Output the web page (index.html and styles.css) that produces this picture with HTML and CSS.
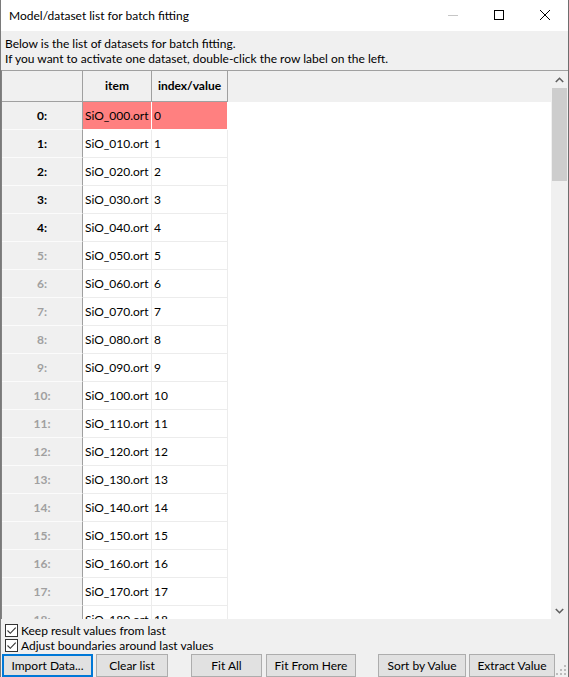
FILE: index.html
```html
<!DOCTYPE html>
<html>
<head>
<meta charset="utf-8">
<link rel="stylesheet" href="styles.css">
</head>
<body>
<div class="window">
  <div class="titlebar">
    <span class="title">Model/dataset list for batch fitting</span>
    <div class="controls">
      <span class="ctl"><svg width="10" height="10" viewBox="0 0 10 10"><line x1="0" y1="5.5" x2="10" y2="5.5" stroke="#c6c6c6" stroke-width="1"/></svg></span>
      <span class="ctl"><svg width="10" height="10" viewBox="0 0 10 10"><rect x="0.5" y="0.5" width="9" height="9" fill="none" stroke="#000" stroke-width="1"/></svg></span>
      <span class="ctl"><svg width="10" height="10" viewBox="0 0 10 10"><path d="M0 0 L10 10 M10 0 L0 10" stroke="#000" stroke-width="1"/></svg></span>
    </div>
  </div>
  <div class="body">
    <div class="intro">
      <div>Below is the list of datasets for batch fitting.</div>
      <div>If you want to activate one dataset, double-click the row label on the left.</div>
    </div>
    <div class="grid-frame">
      <div class="grid-view">
        <div class="hdr-row">
          <div class="corner"></div>
          <div class="colhdr c-item">item</div>
          <div class="colhdr c-val">index/value</div>
        </div>
        <div class="row sel"><div class="rlabel">0:</div><div class="cell c-item">SiO_000.ort</div><div class="cell c-val">0</div></div>
        <div class="row"><div class="rlabel">1:</div><div class="cell c-item">SiO_010.ort</div><div class="cell c-val">1</div></div>
        <div class="row"><div class="rlabel">2:</div><div class="cell c-item">SiO_020.ort</div><div class="cell c-val">2</div></div>
        <div class="row"><div class="rlabel">3:</div><div class="cell c-item">SiO_030.ort</div><div class="cell c-val">3</div></div>
        <div class="row"><div class="rlabel">4:</div><div class="cell c-item">SiO_040.ort</div><div class="cell c-val">4</div></div>
        <div class="row"><div class="rlabel dim">5:</div><div class="cell c-item">SiO_050.ort</div><div class="cell c-val">5</div></div>
        <div class="row"><div class="rlabel dim">6:</div><div class="cell c-item">SiO_060.ort</div><div class="cell c-val">6</div></div>
        <div class="row"><div class="rlabel dim">7:</div><div class="cell c-item">SiO_070.ort</div><div class="cell c-val">7</div></div>
        <div class="row"><div class="rlabel dim">8:</div><div class="cell c-item">SiO_080.ort</div><div class="cell c-val">8</div></div>
        <div class="row"><div class="rlabel dim">9:</div><div class="cell c-item">SiO_090.ort</div><div class="cell c-val">9</div></div>
        <div class="row"><div class="rlabel dim">10:</div><div class="cell c-item">SiO_100.ort</div><div class="cell c-val">10</div></div>
        <div class="row"><div class="rlabel dim">11:</div><div class="cell c-item">SiO_110.ort</div><div class="cell c-val">11</div></div>
        <div class="row"><div class="rlabel dim">12:</div><div class="cell c-item">SiO_120.ort</div><div class="cell c-val">12</div></div>
        <div class="row"><div class="rlabel dim">13:</div><div class="cell c-item">SiO_130.ort</div><div class="cell c-val">13</div></div>
        <div class="row"><div class="rlabel dim">14:</div><div class="cell c-item">SiO_140.ort</div><div class="cell c-val">14</div></div>
        <div class="row"><div class="rlabel dim">15:</div><div class="cell c-item">SiO_150.ort</div><div class="cell c-val">15</div></div>
        <div class="row"><div class="rlabel dim">16:</div><div class="cell c-item">SiO_160.ort</div><div class="cell c-val">16</div></div>
        <div class="row"><div class="rlabel dim">17:</div><div class="cell c-item">SiO_170.ort</div><div class="cell c-val">17</div></div>
        <div class="row"><div class="rlabel dim">18:</div><div class="cell c-item">SiO_180.ort</div><div class="cell c-val">18</div></div>
      </div>
      <div class="vscroll">
        <div class="sbtn"><svg width="9" height="6" viewBox="0 0 9 6"><path d="M0.8 5 L4.5 1.3 L8.2 5" fill="none" stroke="#606060" stroke-width="1.6"/></svg></div>
        <div class="track"><div class="thumb"></div></div>
        <div class="sbtn"><svg width="9" height="6" viewBox="0 0 9 6"><path d="M0.8 1 L4.5 4.7 L8.2 1" fill="none" stroke="#606060" stroke-width="1.6"/></svg></div>
      </div>
    </div>
    <div class="checks">
      <label class="check"><span class="box"><svg width="11" height="11" viewBox="0 0 11 11"><path d="M1.5 5.5 L4.3 8.3 L9.7 2.6" fill="none" stroke="#333" stroke-width="1.1"/></svg></span>Keep result values from last</label>
      <label class="check"><span class="box"><svg width="11" height="11" viewBox="0 0 11 11"><path d="M1.5 5.5 L4.3 8.3 L9.7 2.6" fill="none" stroke="#333" stroke-width="1.1"/></svg></span>Adjust boundaries around last values</label>
    </div>
    <div class="buttons">
      <button class="btn focus b-import">Import Data...</button>
      <button class="btn b-clear">Clear list</button>
      <button class="btn b-fitall">Fit All</button>
      <button class="btn b-fithere">Fit From Here</button>
      <button class="btn b-sort">Sort by Value</button>
      <button class="btn b-extract">Extract Value</button>
    </div>
  </div>
  <svg class="grip" width="11" height="11" viewBox="0 0 11 11">
    <rect x="8" y="0" width="2" height="2" fill="#bcbcbc"/>
    <rect x="4" y="4" width="2" height="2" fill="#bcbcbc"/>
    <rect x="8" y="4" width="2" height="2" fill="#bcbcbc"/>
    <rect x="0" y="8" width="2" height="2" fill="#bcbcbc"/>
    <rect x="4" y="8" width="2" height="2" fill="#bcbcbc"/>
    <rect x="8" y="8" width="2" height="2" fill="#bcbcbc"/>
  </svg>
</div>
</body>
</html>
```
FILE: styles.css
```css
* { box-sizing: border-box; }
html, body { margin: 0; padding: 0; }
body {
  width: 569px;
  height: 677px;
  overflow: hidden;
  font-family: Lato, "Noto Sans", sans-serif;
  font-size: 12px;
  color: #000;
  background: #f0f0f0;
}
.window {
  position: relative;
  width: 569px;
  height: 677px;
  display: flex;
  flex-direction: column;
  border-left: 1px solid #7a7a7a;
  border-right: 1px solid #6e6e6e;
  background: #f0f0f0;
}
.titlebar {
  height: 31px;
  flex: none;
  background: #fff;
  display: flex;
  align-items: center;
}
.title {
  padding-left: 8px;
  font-size: 12px;
  line-height: 16px;
  flex: 1;
}
.controls { display: flex; height: 31px; }
.ctl {
  width: 46px;
  height: 31px;
  display: flex;
  align-items: center;
  justify-content: center;
}
.ctl svg { display: block; margin-top: -1px; }
.body {
  flex: 1;
  display: flex;
  flex-direction: column;
}
.intro {
  padding: 5px 0 4px 4px;
  line-height: 15px;
  white-space: nowrap;
}
.grid-frame {
  height: 549px;
  flex: none;
  display: flex;
  border-top: 1px solid #a0a0a0;
  border-left: 1px solid #828282;
  background: #fff;
}
.grid-view {
  flex: 1;
  overflow: hidden;
  background: #fff;
}
.hdr-row {
  display: flex;
  height: 31px;
  background: #f0f0f0;
}
.corner, .colhdr {
  height: 31px;
  border-right: 1px solid #a0a0a0;
  border-bottom: 1px solid #a0a0a0;
  background: #f0f0f0;
}
.corner { width: 81px; }
.colhdr {
  font-weight: bold;
  display: flex;
  align-items: center;
  justify-content: center;
  padding-bottom: 1px;
}
.c-item { width: 69px; }
.c-val { width: 76px; }
.row {
  display: flex;
  height: 28px;
}
.rlabel {
  width: 81px;
  height: 28px;
  background: #f0f0f0;
  border-right: 1px solid #a0a0a0;
  border-bottom: 1px solid #fbfbfb;
  font-weight: bold;
  display: flex;
  align-items: center;
  justify-content: center;
  padding-bottom: 1px;
}
.rlabel.dim { color: #a0a0a0; }
.cell {
  height: 28px;
  border-right: 1px solid #ececec;
  border-bottom: 1px solid #ececec;
  padding: 0 0 1px 2px;
  display: flex;
  align-items: center;
  white-space: nowrap;
  overflow: hidden;
}
.row.sel .cell {
  background: #ff8080;
  border-right-color: #fff;
  border-bottom-color: #fff;
}
.vscroll {
  width: 17px;
  flex: none;
  background: #f0f0f0;
  display: flex;
  flex-direction: column;
}
.sbtn {
  height: 17px;
  display: flex;
  align-items: center;
  justify-content: center;
}
.sbtn svg { display: block; }
.track {
  flex: 1;
  padding: 0 1px;
}
.thumb {
  height: 93px;
  background: #cdcdcd;
}
.checks {
  margin-top: 4px;
  padding-left: 4px;
  display: flex;
  flex-direction: column;
}
.check {
  height: 15px;
  display: flex;
  align-items: center;
  line-height: 15px;
  white-space: nowrap;
}
.box {
  width: 13px;
  height: 13px;
  border: 1px solid #333;
  background: #fff;
  margin-right: 3px;
  display: flex;
  align-items: center;
  justify-content: center;
}
.box svg { display: block; }
.buttons {
  margin-top: 1px;
  height: 23px;
  display: flex;
  padding-left: 1px;
}
.btn {
  height: 23px;
  margin: 0;
  padding: 0 0 1px 0;
  font-family: inherit;
  font-size: 12px;
  color: #000;
  background: #e1e1e1;
  border: 1px solid #adadad;
  white-space: nowrap;
}
.btn.focus { border: 2px solid #0078d7; }
.b-import { width: 91px; }
.b-clear { width: 72px; margin-left: 3px; }
.b-fitall { width: 71px; margin-left: 23px; }
.b-fithere { width: 90px; margin-left: 4px; }
.b-sort { width: 88px; margin-left: 22px; }
.b-extract { width: 86px; margin-left: 3px; }
.grip {
  position: absolute;
  right: 1px;
  bottom: 1px;
}
```
